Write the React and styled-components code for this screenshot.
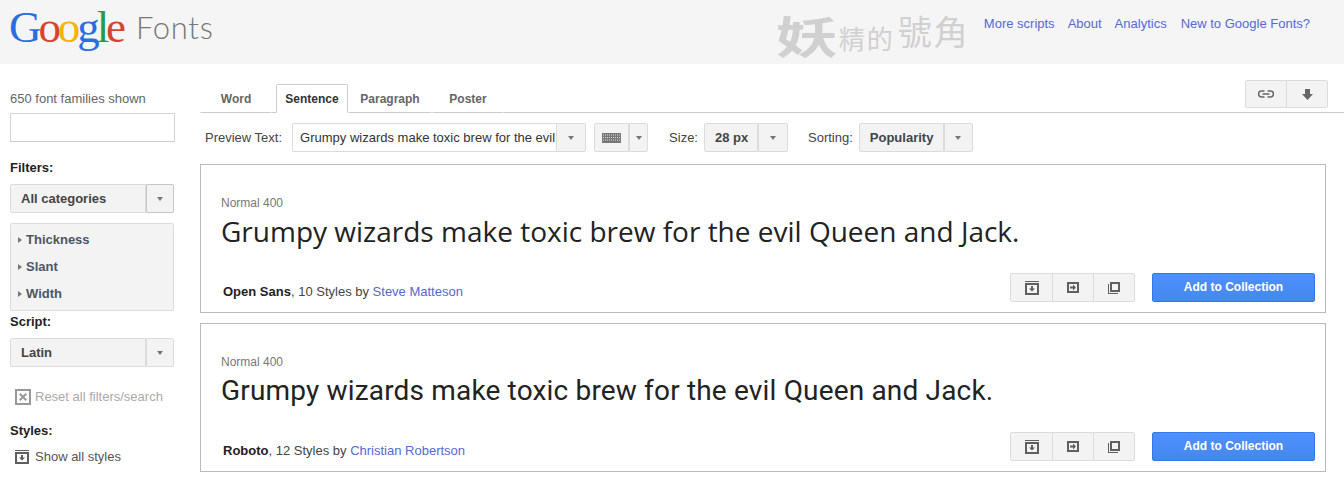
import React from 'react';
import styled, { createGlobalStyle } from 'styled-components';

const Global = createGlobalStyle`
  html, body { margin: 0; padding: 0; background: #fff; overflow: hidden; }
  body { font-family: "Liberation Sans", Arial, sans-serif; font-size: 13px; color: #333; }
  * { box-sizing: border-box; }
`;

const Caret = () => <CaretShape />;

const Select = ({ label, width, arrow = 29, dark }) => (
  <SelectWrap>
    <SelectMain $width={width}>{label}</SelectMain>
    <SelectArrow $width={arrow} $dark={dark}><Caret /></SelectArrow>
  </SelectWrap>
);

const ArchiveIcon = () => (
  <svg width="14" height="14" viewBox="0 0 14 14">
    <path d="M0 0h14v1H0z M0 2h14v12H0z M2 4v8h10V4z" fill="#5f5f5f" fillRule="evenodd" />
    <path d="M6 5h2v2.500h2L7 10.500 4 7.500h2z" fill="#5f5f5f" />
  </svg>
);

const ArrowBoxIcon = () => (
  <svg width="12" height="11" viewBox="0 0 12 11">
    <path d="M0 0h12v11H0z M2 2v7h8V2z" fill="#5f5f5f" fillRule="evenodd" />
    <path d="M3 4.500h3V2.500l3 3-3 3V6.500H3z" fill="#5f5f5f" />
  </svg>
);

const CopiesIcon = () => (
  <svg width="12" height="12" viewBox="0 0 12 12">
    <path d="M2 0h10v10H2z M4 2v6h6V2z" fill="#5f5f5f" fillRule="evenodd" />
    <path d="M0 2h1v9h9v1H0z" fill="#5f5f5f" />
  </svg>
);

const ResetIcon = () => (
  <svg width="16" height="16" viewBox="0 0 16 16">
    <path d="M0 0h16v16H0z M2 2v12h12V2z" fill="#999" fillRule="evenodd" />
    <path d="M4 5.400 5.400 4 8 6.600 10.600 4 12 5.400 9.400 8 12 10.600 10.600 12 8 9.400 5.400 12 4 10.600 6.600 8z" fill="#999" />
  </svg>
);

const LinkIcon = () => (
  <svg width="16" height="8" viewBox="0 0 16 8">
    <path d="M6.500 1H3.500a3 3 0 0 0 0 6h3 M9.500 1h3a3 3 0 0 1 0 6h-3 M4.500 4h7" fill="none" stroke="#666" strokeWidth="1.600" />
  </svg>
);

const DownIcon = () => (
  <svg width="11" height="11" viewBox="0 0 11 11">
    <path d="M3 0h5v5h3L5.500 11 0 5h3z" fill="#666" />
  </svg>
);

const KeyboardIcon = () => (
  <KeyboardBody>
    <svg width="19" height="8" viewBox="0 0 19 8">
      <path d="M1 1h17M1 3.500h17M1 6h17" stroke="#ddd" strokeWidth="1" strokeDasharray="1 1" />
    </svg>
  </KeyboardBody>
);

const FontCard = ({ family, sampleFont, spacing, shift, styles, author }) => (
  <Card>
    <Weight>Normal 400</Weight>
    <Sample $font={sampleFont} $spacing={spacing} $shift={shift}>Grumpy wizards make toxic brew for the evil Queen and Jack.</Sample>
    <CardFooter>
      <Meta><b>{family}</b>, {styles} Styles by <a href="#author">{author}</a></Meta>
      <IconGroup>
        <IconButton $width={43}><ArchiveIcon /></IconButton>
        <IconButton $width={42}><ArrowBoxIcon /></IconButton>
        <IconButton $width={42}><CopiesIcon /></IconButton>
      </IconGroup>
      <AddButton>Add to Collection</AddButton>
    </CardFooter>
  </Card>
);

export default function App() {
  return (
    <>
      <Global />
      <Header>
        <Logo>
          <span style={{ color: '#2a6fe0' }}>G</span>
          <span style={{ color: '#d8432f' }}>o</span>
          <span style={{ color: '#f4b400' }}>o</span>
          <span style={{ color: '#2a6fe0' }}>g</span>
          <span style={{ color: '#1f9d55' }}>l</span>
          <span style={{ color: '#d8432f' }}>e</span>
        </Logo>
        <LogoFonts>Fonts</LogoFonts>
        <Watermark>
          <WatermarkBig>妖</WatermarkBig>
          <WatermarkSmall>精的</WatermarkSmall>
          <WatermarkMid>號角</WatermarkMid>
        </Watermark>
        <TopNav>
          <a href="#scripts">More scripts</a>
          <a href="#about">About</a>
          <a href="#analytics">Analytics</a>
          <a href="#new">New to Google Fonts?</a>
        </TopNav>
      </Header>
      <Page>
        <Sidebar>
          <Count>650 font families shown</Count>
          <SearchInput />
          <SideTitle $mt={19}>Filters:</SideTitle>
          <SideSelect>
            <Select label="All categories" width={136} arrow={28} dark />
          </SideSelect>
          <FilterPanel>
            <FilterRow>Thickness</FilterRow>
            <FilterRow>Slant</FilterRow>
            <FilterRow>Width</FilterRow>
          </FilterPanel>
          <SideTitle $mt={3}>Script:</SideTitle>
          <SideSelect>
            <Select label="Latin" width={136} arrow={28} />
          </SideSelect>
          <ActionRow $muted $mt={22}><ResetIcon />Reset all filters/search</ActionRow>
          <SideTitle $mt={19}>Styles:</SideTitle>
          <ActionRow $mt={11}><ArchiveIcon />Show all styles</ActionRow>
        </Sidebar>
        <Main>
          <TabBar>
            <Tab $width={72}>Word</Tab>
            <Tab $active $width={72} $ml={4}>Sentence</Tab>
            <Tab $width={84}>Paragraph</Tab>
            <Tab $width={72}>Poster</Tab>
            <TabTools>
              <ToolButton $width={42}><LinkIcon /></ToolButton>
              <ToolButton $width={41}><DownIcon /></ToolButton>
            </TabTools>
          </TabBar>
          <Toolbar>
            <ToolLabel $mr={10}>Preview Text:</ToolLabel>
            <PreviewSelect>
              <PreviewValue>Grumpy wizards make toxic brew for the evil</PreviewValue>
              <SelectArrow $width={30}><Caret /></SelectArrow>
            </PreviewSelect>
            <KeyboardSelect>
              <SelectMain $width={35}><KeyboardIcon /></SelectMain>
              <SelectArrow $width={19}><Caret /></SelectArrow>
            </KeyboardSelect>
            <ToolLabel $ml={21}>Size:</ToolLabel>
            <Select label="28 px" width={54} arrow={30} />
            <ToolLabel $ml={20}>Sorting:</ToolLabel>
            <Select label="Popularity" width={85} arrow={29} />
          </Toolbar>
          <FontCard family="Open Sans" sampleFont='"Open Sans"' spacing={0} shift={0} styles={10} author="Steve Matteson" />
          <FontCard family="Roboto" sampleFont="Roboto" spacing={0.17} shift={1} styles={12} author="Christian Robertson" />
        </Main>
      </Page>
    </>
  );
}

const Header = styled.header`
  height: 64px;
  background: #f5f5f5;
  display: flex;
  align-items: flex-start;
  padding: 0 34px 0 9px;
`;

const Logo = styled.div`
  font-family: "Liberation Serif", serif;
  font-size: 45px;
  line-height: 54px;
  letter-spacing: -3.100px;
`;

const LogoFonts = styled.div`
  font-family: Lato, sans-serif;
  font-weight: 300;
  font-size: 31px;
  line-height: 54px;
  color: #777;
  margin-left: 13px;
  letter-spacing: 0.7px;
`;

const Watermark = styled.div`
  display: flex;
  align-items: center;
  height: 64px;
  width: 195px;
  margin-left: auto;
  color: #d0d0d0;
  font-family: "Noto Sans CJK TC", sans-serif;
  white-space: nowrap;
`;

const WatermarkBig = styled.span`
  display: inline-block;
  width: 62px;
  font-size: 44px;
  line-height: 44px;
  font-weight: 700;
  margin-top: 5px;
  transform: scaleX(1.4);
  transform-origin: left center;
`;

const WatermarkSmall = styled.span`
  font-size: 26px;
  line-height: 30px;
  margin: 12px 3px 0 1px;
  letter-spacing: 2px;
`;

const WatermarkMid = styled.span`
  font-size: 34px;
  line-height: 38px;
  margin-top: -2px;
  letter-spacing: 2px;
`;

const TopNav = styled.nav`
  display: flex;
  gap: 13px;
  margin-left: 13px;
  line-height: 47px;
  a { color: #5469d4; text-decoration: none; }
  a:nth-child(3) { margin-right: 1px; }
`;

const Page = styled.div`
  display: flex;
  align-items: flex-start;
`;

const Sidebar = styled.aside`
  width: 200px;
  padding: 27px 0 0 10px;
  display: flex;
  flex-direction: column;
  align-items: flex-start;
`;

const Count = styled.div`
  color: #666;
  line-height: 15px;
`;

const SearchInput = styled.div`
  width: 165px;
  height: 29px;
  margin-top: 7px;
  border: 1px solid #d4d4d4;
  border-bottom-color: #ccc;
  background: #fff;
`;

const SideTitle = styled.div`
  font-weight: 700;
  color: #222;
  line-height: 14px;
  margin-top: ${p => p.$mt}px;
`;

const SideSelect = styled.div`
  margin-top: 9px;
`;

const SelectWrap = styled.div`
  display: flex;
  height: 29px;
  flex-shrink: 0;
`;

const SelectMain = styled.div`
  width: ${p => p.$width}px;
  height: 29px;
  display: flex;
  align-items: center;
  padding-left: 10px;
  background: #f3f3f3;
  border: 1px solid #dcdcdc;
  border-radius: 2px 0 0 2px;
  font-weight: 700;
  color: #444;
`;

const SelectArrow = styled.div`
  width: ${p => p.$width}px;
  height: 29px;
  display: flex;
  align-items: center;
  justify-content: center;
  background: #f3f3f3;
  border: 1px solid ${p => (p.$dark ? '#c6c6c6' : '#dcdcdc')};
  border-radius: 0 2px 2px 0;
  flex-shrink: 0;
`;

const CaretShape = styled.span`
  width: 0;
  height: 0;
  border-left: 3.500px solid transparent;
  border-right: 3.500px solid transparent;
  border-top: 4px solid #777;
`;

const FilterPanel = styled.div`
  width: 164px;
  height: 88px;
  margin-top: 10px;
  margin-bottom: 1px;
  background: #f3f3f3;
  border: 1px solid #dcdcdc;
  border-radius: 2px;
  padding-top: 2px;
`;

const FilterRow = styled.div`
  height: 27px;
  line-height: 27px;
  font-weight: 700;
  color: #4d5666;
  padding-left: 15px;
  position: relative;
  &::before {
    content: '';
    position: absolute;
    left: 7px;
    top: 11px;
    border-top: 3.500px solid transparent;
    border-bottom: 3.500px solid transparent;
    border-left: 4px solid #777;
  }
`;

const ActionRow = styled.div`
  display: flex;
  align-items: center;
  gap: 6px;
  margin-top: ${p => p.$mt}px;
  margin-left: 5px;
  line-height: 16px;
  color: ${p => (p.$muted ? '#aaa' : '#555')};
  & > svg { margin-right: ${p => (p.$muted ? -2 : 0)}px; }
`;

const Main = styled.main`
  flex: 1;
  min-width: 0;
`;

const TabBar = styled.div`
  display: flex;
  align-items: flex-end;
  height: 49px;
  border-bottom: 1px solid #ccc;
  position: relative;
`;

const Tab = styled.div`
  width: ${p => p.$width}px;
  height: 29px;
  margin-bottom: -1px;
  margin-left: ${p => p.$ml || 0}px;
  display: flex;
  align-items: center;
  justify-content: center;
  font-size: 12px;
  font-weight: 700;
  color: ${p => (p.$active ? '#333' : '#666')};
  background: #fff;
  border: 1px solid ${p => (p.$active ? '#ccc' : 'transparent')};
  border-bottom-color: ${p => (p.$active ? '#fff' : '#ccc')};
  border-radius: 2px 2px 0 0;
`;

const TabTools = styled.div`
  position: absolute;
  right: 16px;
  top: 16px;
  display: flex;
`;

const ToolButton = styled.div`
  width: ${p => p.$width}px;
  height: 28px;
  display: flex;
  align-items: center;
  justify-content: center;
  background: #f3f3f3;
  border: 1px solid #dcdcdc;
  &:first-child { border-radius: 2px 0 0 2px; }
  &:last-child { border-radius: 0 2px 2px 0; border-left: 0; }
`;

const Toolbar = styled.div`
  display: flex;
  align-items: center;
  height: 29px;
  margin-top: 10px;
  padding-left: 5px;
`;

const ToolLabel = styled.div`
  color: #444;
  margin-left: ${p => p.$ml || 0}px;
  margin-right: ${p => p.$mr || 6}px;
  white-space: nowrap;
`;

const PreviewSelect = styled.div`
  display: flex;
  width: 294px;
  height: 29px;
  flex-shrink: 0;
`;

const PreviewValue = styled.div`
  flex: 1;
  min-width: 0;
  display: flex;
  align-items: center;
  padding-left: 7px;
  border: 1px solid #dcdcdc;
  border-right: 0;
  border-radius: 2px 0 0 2px;
  white-space: nowrap;
  overflow: hidden;
  color: #333;
`;

const KeyboardSelect = styled.div`
  display: flex;
  margin-left: 8px;
`;

const KeyboardBody = styled.span`
  width: 19px;
  height: 10px;
  margin-left: -3px;
  background: #777;
  display: flex;
  align-items: center;
`;

const Card = styled.section`
  width: 1126px;
  height: 149px;
  margin-top: 12px;
  border: 1px solid #bbb;
  padding: 0 10px 0 20px;
  display: flex;
  flex-direction: column;
  & + & { margin-top: 10px; }
`;

const Weight = styled.div`
  margin-top: 30px;
  font-size: 12px;
  color: #777;
  line-height: 16px;
`;

const Sample = styled.div`
  font-family: ${p => p.$font}, sans-serif;
  font-size: 28px;
  letter-spacing: ${p => p.$spacing}px;
  line-height: 38px;
  margin-top: ${p => 1 + p.$shift}px;
  color: #222;
  white-space: nowrap;
`;

const CardFooter = styled.div`
  margin-top: auto;
  margin-bottom: 10px;
  display: flex;
  align-items: flex-start;
`;

const Meta = styled.div`
  flex: 1;
  padding: 11px 0 0 2px;
  line-height: 15px;
  color: #444;
  b { color: #222; }
  a { color: #5469d4; text-decoration: none; }
`;

const IconGroup = styled.div`
  display: flex;
  margin-right: 17px;
`;

const IconButton = styled.div`
  width: ${p => p.$width}px;
  height: 29px;
  display: flex;
  align-items: center;
  justify-content: center;
  background: #f3f3f3;
  border: 1px solid #dcdcdc;
  margin-left: -1px;
  &:first-child { margin-left: 0; border-radius: 2px 0 0 2px; }
  &:last-child { border-radius: 0 2px 2px 0; }
`;

const AddButton = styled.button`
  width: 163px;
  height: 29px;
  padding: 0 0 2px;
  font: 700 12px "Liberation Sans", Arial, sans-serif;
  color: #fff;
  background: linear-gradient(#4d90fe, #4787ed);
  border: 1px solid #3079ed;
  border-radius: 2px;
`;
